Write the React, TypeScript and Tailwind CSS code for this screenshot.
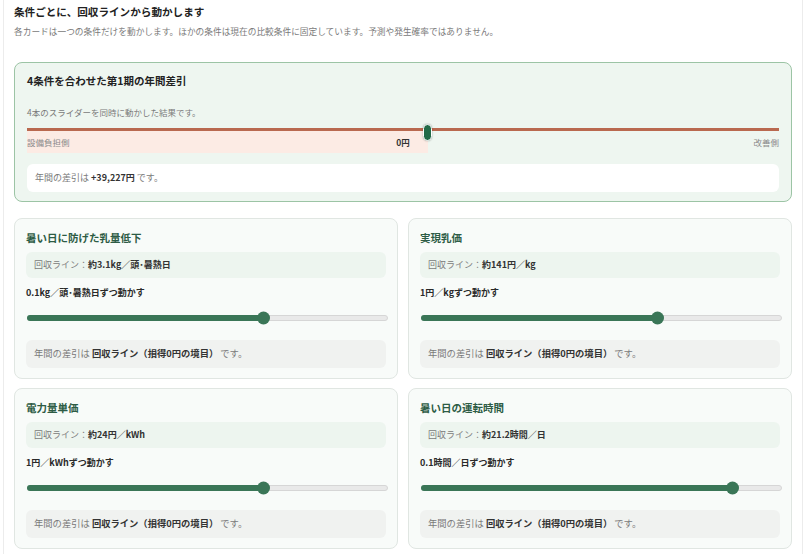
import React from "react";

const font = { fontFamily: '"Noto Sans CJK JP", "Noto Sans", sans-serif' };

type Card = {
  title: string;
  line: string;
  step: string;
  pct: number;
};

const cards: Card[] = [
  { title: "暑い日に防げた乳量低下", line: "約3.1kg／頭･暑熱日", step: "0.1kg／頭･暑熱日ずつ動かす", pct: 65.6 },
  { title: "実現乳価", line: "約141円／kg", step: "1円／kgずつ動かす", pct: 65.7 },
  { title: "電力量単価", line: "約24円／kWh", step: "1円／kWhずつ動かす", pct: 65.6 },
  { title: "暑い日の運転時間", line: "約21.2時間／日", step: "0.1時間／日ずつ動かす", pct: 86.4 },
];

function Slider({ pct }: { pct: number }) {
  return (
    <div className="relative h-[16px] ml-[1px] -mr-[2px] flex items-center">
      <div className="relative w-full h-[6px] rounded-full bg-[#e9e9e9] border border-[#d6d6d6]">
        <div
          className="absolute -left-px -top-px h-[6px] rounded-full bg-[#3a7657]"
          style={{ width: `${pct}%` }}
        />
        <div
          className="absolute top-1/2 -translate-y-1/2 w-[13px] h-[13px] -ml-[6.5px] rounded-full bg-[#3a7657]"
          style={{ left: `${pct}%` }}
        />
      </div>
    </div>
  );
}

function CardView({ c }: { c: Card }) {
  return (
    <div className="flex flex-col rounded-[8px] border border-[#e0e6e2] bg-[#f8fbf9] pt-[12px] pb-[10px] px-[11px]">
      <div className="h-[14px] leading-[14px] text-[10.5px] font-bold text-[#2d5c45]">{c.title}</div>
      <div className="mt-[7px] h-[26px] rounded-[6px] bg-[#edf5ef] pl-[8px] flex items-center text-[9px]">
        <span className="text-[#7a7a7a]">回収ライン：</span>
        <span className="font-bold text-[#333]">{c.line}</span>
      </div>
      <div className="mt-[8px] h-[14px] leading-[14px] text-[9px] font-bold text-[#2a2a2a]">{c.step}</div>
      <div className="mt-[10px]">
        <Slider pct={c.pct} />
      </div>
      <div className="mt-[14px] h-[28px] rounded-[6px] bg-[#f0f2f0] pl-[8px] flex items-center text-[9.3px]">
        <span className="text-[#7a7a7a]">年間の差引は&nbsp;</span>
        <span className="font-bold text-[#333]">回収ライン（損得0円の境目）</span>
        <span className="text-[#7a7a7a]">&nbsp;です。</span>
      </div>
    </div>
  );
}

export default function App() {
  const thumb = 53.3;
  return (
    <div className="min-h-[554px] bg-white" style={font}>
      <div className="mx-[3px] min-h-[554px] border-x border-[#ececec] px-[10px] pt-[4px] flex flex-col">
        <div className="h-[16px] leading-[16px] text-[10.6px] font-bold text-[#222]">
          条件ごとに、回収ラインから動かします
        </div>
        <div className="mt-[6px] h-[12px] leading-[12px] text-[8.7px] text-[#7a7a7a]">
          各カードは一つの条件だけを動かします。ほかの条件は現在の比較条件に固定しています。予測や発生確率ではありません。
        </div>

        <div className="mt-[24px] flex flex-col rounded-[8px] border border-[#9cc4a5] bg-[#eef6f0] pt-[11px] pb-[9px] px-[12px]">
          <div className="h-[14px] leading-[14px] text-[10.5px] font-bold text-[#222]">
            4条件を合わせた第1期の年間差引
          </div>
          <div className="mt-[18px] h-[12px] leading-[12px] text-[8.5px] text-[#7a7a7a]">
            4本のスライダーを同時に動かした結果です。
          </div>
          <div className="relative mt-[6px] pt-[4px]">
            <div
              className="absolute left-0 top-[6px] bottom-0 bg-[#fcebe4]"
              style={{ width: `${thumb}%` }}
            />
            <div className="relative h-[2.5px] bg-[#b9694f]">
              <div
                className="absolute -top-[4px] w-[9px] h-[17px] -ml-[4.5px] rounded-full bg-[#236b48] border-[1.5px] border-white shadow-[0_0_2px_rgba(0,0,0,0.3)]"
                style={{ left: `${thumb}%` }}
              />
            </div>
            <div className="relative grid grid-cols-3 pt-[5px] pb-[5px] text-[8.5px] leading-[12px]">
              <span className="text-[#8a8a8a]">設備負担側</span>
              <span className="text-center font-bold text-[#333]">0円</span>
              <span className="text-right text-[#8a8a8a]">改善側</span>
            </div>
          </div>
          <div className="mt-[11px] h-[28px] rounded-[6px] bg-white pl-[8px] flex items-center text-[9px]">
            <span className="text-[#7a7a7a]">年間の差引は&nbsp;</span>
            <span className="font-bold text-[#333]">+39,227円</span>
            <span className="text-[#7a7a7a]">&nbsp;です。</span>
          </div>
        </div>

        <div className="mt-[16px] grid grid-cols-2 gap-x-[10px] gap-y-[9px]">
          {cards.map((c) => (
            <CardView key={c.title} c={c} />
          ))}
        </div>
      </div>
    </div>
  );
}
